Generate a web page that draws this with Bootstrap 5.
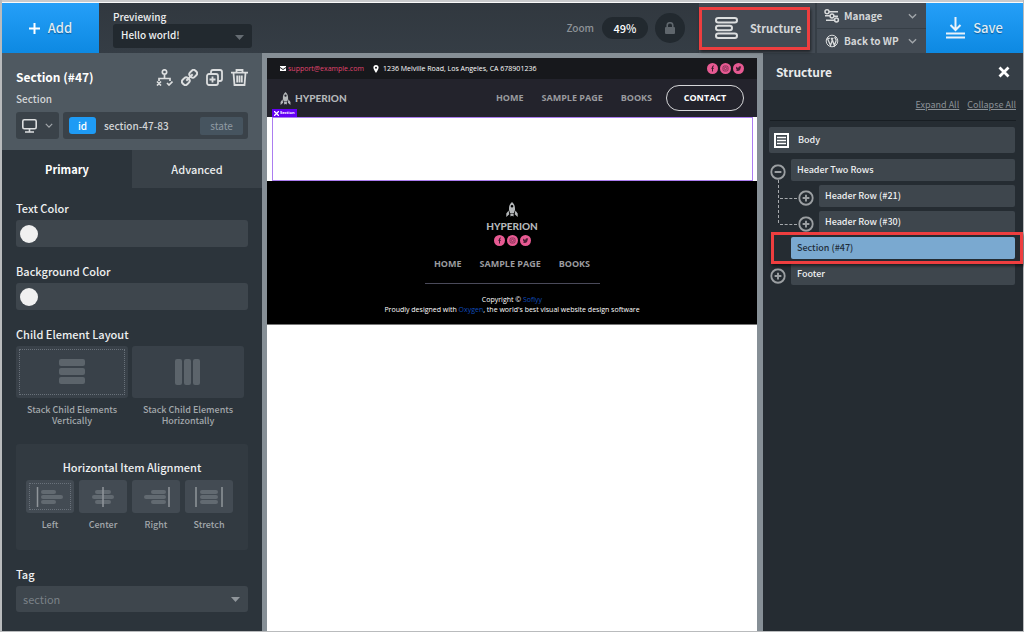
<!DOCTYPE html>
<html lang="en">
<head>
<meta charset="utf-8">
<meta name="viewport" content="width=device-width, initial-scale=1">
<title>Page builder</title>
<link href="https://cdn.jsdelivr.net/npm/bootstrap@5.3.0/dist/css/bootstrap.min.css" rel="stylesheet">
<script src="https://cdn.jsdelivr.net/npm/bootstrap@5.3.0/dist/js/bootstrap.bundle.min.js"></script>
<style>
:root { --ink:#2c343b; --field:#3e464d; --tile:#394149; --blue:#1e9bf5; --red:#ee3e3f; }
body { font-family:"Noto Sans CJK SC",sans-serif; font-size:10px; line-height:14px; font-weight:500; color:#eef0f1; background:#fff; }
button, input, select { font:inherit; color:inherit; }
button { border:0; padding:0; background:none; }
svg { display:block; flex:none; }
.builder { min-height:100vh; background:var(--ink); border:solid #b9bbbd; border-width:0 1px 1px 2px; }
.edge { height:3px; background:#fafafa; border-top:2px solid #c9cacc; }
/* toolbar */
.toolbar { height:50px; background:linear-gradient(#31383f,#353d45); }
.action { width:97px; background:linear-gradient(#259ff8,#0d89e2); font-size:13px; color:#dfeaf3; text-shadow:0 1px 1px #0a5c9c; }
.preview-pick { width:139px; margin-left:14px; padding-top:7px; }
.pick { appearance:none; width:100%; border:0; border-radius:3px; }
.pick-wrap { position:relative; }
.pick-wrap svg { position:absolute; right:8px; top:11px; pointer-events:none; }
.preview-pick .pick { height:24px; background:#22292f; padding:0 8px 2px; display:block; }
.zoom-text { color:#8d9297; }
.zoom-pill { width:46px; height:22px; border-radius:11px; background:#22292f; color:#fff; font-size:11px; }
.lock { width:30px; height:30px; border-radius:50%; background:#22292f; color:#5f666c; margin:0 14px 0 7px; }
.structure-btn { position:relative; width:116px; background:#434b54; font-weight:700; font-size:11px; color:#d4d6d8; }
.marked::after { content:""; position:absolute; border:3px solid var(--red); box-shadow:1px 2px 3px rgba(0,0,0,.55); pointer-events:none; z-index:2; }
.structure-btn::after { inset:4px 5px 3px 0; }
.menus { width:111px; background:#434b54; border-left:2px solid #363e46; font-weight:700; color:#d4d6d8; }
.menus button { height:25px; padding:0 9px 0 7px; }
.menus button + button { border-top:1px solid #363e46; }
/* side panels */
.side { width:260px; flex:none; }
.side-head { background:#4f5961; height:97px; padding:15px 14px 0; color:#d3d5d7; }
.side-head h1 { font-size:12px; line-height:18px; font-weight:700; color:#fff; }
.device, .selector { height:27px; border-radius:3px; background:#3a4249; }
.device { width:43px; }
.selector { padding:0 5px 0 6px; }
.id-tag { background:var(--blue); width:27px; height:17px; border-radius:3px; color:#fff; }
.state { width:43px; height:18px; border-radius:2px; background:#46545f; color:#8f9aa3; font-weight:400; }
.tabs button { height:38px; background:#394148; font-size:11px; color:#eceeef; }
.tabs button.active { background:var(--ink); font-weight:700; color:#fff; }
.controls { padding:13px 14px 0; }
.controls label, .controls h2 { display:block; font-size:11px; line-height:14px; font-weight:500; margin:0 0 5px; }
.color-row { display:flex; align-items:center; height:27px; border-radius:3px; background:var(--field); padding:0 4px; margin-bottom:17px; }
.color-row button { width:18px; height:18px; border-radius:50%; background:#f0f0f0; flex:none; }
.color-row input { flex:1; min-width:0; border:0; background:none; outline:0; }
.choice { color:#a3a8ac; font-size:9px; line-height:11px; text-align:center; }
.tile { display:flex; align-items:center; justify-content:center; border-radius:3px; background:var(--tile); padding:4px; }
.tile.on span { outline:1px dotted #69717a; }
.tile span { width:100%; height:100%; display:flex; align-items:center; justify-content:center; }
.stack .choice { width:112px; }
.stack .tile { height:52px; width:112px; margin-bottom:6px; }
.align-box { background:#323a41; border-radius:3px; height:106px; margin:18px 0 17px; padding:16px 10px 0; }
.align-box h2 { text-align:center; margin-bottom:6px; }
.align-box .d-flex { gap:5px; }
.align-box .choice { width:48px; }
.align-box .tile { width:48px; height:33px; background:#434b53; margin-bottom:6px; }
.tag-pick { height:26px; background:var(--field); color:#7a8187; padding:0 7px; font-size:11px; font-weight:400; display:block; }
/* canvas */
.stage { background:#868f96; padding:5px 6px 0 5px; min-width:0; }
.site { height:100%; background:#fff; font-family:"Open Sans",sans-serif; font-size:7px; line-height:10px; font-weight:400; }
.site a { text-decoration:none; }
.strip { height:21px; background:#17181c; padding:0 13px; color:#fff; }
.strip a { color:#e0456f; margin:0 9px 0 2px; }
.masthead { height:38px; background:#23232c; padding:0 13px; }
.menu-links, .menu-links a { color:#9a9b9f; font-size:9px; font-weight:700; }
.menu-links { gap:18px; }
.social { gap:2px; }
.brand { font-family:Lato,sans-serif; font-weight:900; font-size:10px; color:#b4b7b9; }
.contact { width:78px; height:26px; border:1px solid #d6d7d9; border-radius:13px; color:#fff !important; margin-left:-4px; }
.picked { position:relative; height:64px; padding:0 4px 0 5px; }
.picked > div { border:1px solid #ab7df0; height:100%; }
.flag { position:absolute; left:5px; top:-8px; height:8px; width:25px; background:#6400f5; color:#fff; font-size:4px; line-height:8px; font-weight:700; }
.flag svg { margin:0 1px 0 2px; }
.foot { background:#000; height:144px; padding-top:21px; color:#fff; border-bottom:1px solid #777; }
.foot .menu-links { margin-top:13px; }
.foot p a { color:#0f4bb8; }
.foot hr { width:175px; margin:14px 0 11px; border-color:#4a4a5a; opacity:1; }
/* tree */
.tree-panel { background:#252c32; padding-bottom:8px; }
.tree-head { height:37px; background:#363e46; padding:0 13px; }
.tree-head h2 { font-size:12px; line-height:18px; font-weight:700; margin:0; color:#e9ebec; }
.tree-links { margin:0 7px; height:31px; border-bottom:1px solid #181e23; font-size:9px; font-weight:400; }
.tree-links a { color:#8b9197; }
.tree { list-style:none; margin:0; padding:6px 8px 0 6px; }
.tree ul { list-style:none; margin:0; padding:0 0 0 28px; position:relative; }
.tree ul::before { content:""; position:absolute; left:9px; top:-5px; height:43px; border-left:1px dashed #a5a9ac; }
.tree li li { position:relative; }
.tree li li::before { content:""; position:absolute; left:-17px; top:13px; width:17px; border-top:1px dashed #a5a9ac; }
.node { display:flex; align-items:center; position:relative; height:22px; margin-bottom:4px; }
.node .twist { width:22px; height:22px; flex:none; padding-top:3px; color:#9b9fa2; }
.node .name { flex:1; height:22px; border-radius:2px; background:var(--field); text-align:left; padding:0 6px; font-size:9px; }
.node.body { height:26px; margin-bottom:6px; background:var(--field); border-radius:2px; padding-left:5px; }
.node.body .name { padding-left:9px; }
.node.sel .name { background:#7aa9d0; color:#1f2d3a; }
.node.sel::after { inset:-5px -8px -5px 2px; }
</style>
</head>
<body>
<svg width="0" height="0" class="position-absolute" aria-hidden="true">
  <defs>
    <symbol id="chev" viewBox="0 0 10 6"><path d="M1 1l4 4 4-4" fill="none" stroke="#a2a7ab" stroke-width="1.5"/></symbol>
    <symbol id="rocket" viewBox="0 0 12 15"><path d="M6 0C3.500 2 2.800 4.500 3 8L4 11H8L9 8C9.200 4.500 8.500 2 6 0ZM6 3a1.300 1.300 0 1 1 0 2.600A1.300 1.300 0 0 1 6 3ZM2.600 8.500L.3 11.500V15L3.300 12.300ZM9.400 8.500l2.300 3V15L8.700 12.300ZM4.300 11.500h3.400L7.500 14.500 6 13.800 4.500 14.500Z" fill="#b4b7b9" fill-rule="evenodd"/></symbol>
    <symbol id="fb" viewBox="0 0 11 11"><circle cx="5.500" cy="5.500" r="5.500" fill="#e75a92"/><path d="M7 3H6.300Q5.500 3 5.500 4V8.500M4.300 5.300H6.800" stroke="#3a1c2c" stroke-width="1" fill="none"/></symbol>
    <symbol id="ig" viewBox="0 0 11 11"><circle cx="5.500" cy="5.500" r="5.500" fill="#e75a92"/><rect x="3" y="3" width="5" height="5" rx="1.300" fill="none" stroke="#6d2a49" stroke-width=".8"/><circle cx="5.500" cy="5.500" r="1.200" fill="none" stroke="#6d2a49" stroke-width=".7"/></symbol>
    <symbol id="tw" viewBox="0 0 11 11"><circle cx="5.500" cy="5.500" r="5.500" fill="#e75a92"/><path d="M3 3.500Q4 4.700 5.400 4.700 5.400 3.200 6.700 3.200L8.200 3.600 7.600 5Q7.300 8 4.700 8L2.800 7.400 3.900 7Q2.700 5.500 3 3.500Z" fill="#4a2036"/></symbol>
    <symbol id="plus" viewBox="0 0 14 14"><circle cx="7" cy="7" r="6" fill="none" stroke="currentColor" stroke-width="1.700"/><path d="M7 4v6M4 7h6" stroke="currentColor" stroke-width="1.700"/></symbol>
    <symbol id="minus" viewBox="0 0 14 14"><circle cx="7" cy="7" r="6" fill="none" stroke="currentColor" stroke-width="1.700"/><path d="M4 7h6" stroke="currentColor" stroke-width="1.700"/></symbol>
  </defs>
</svg>
<div class="builder d-flex flex-column">
  <div class="edge"></div>
  <header class="toolbar d-flex">
    <button class="action d-flex align-items-center justify-content-center gap-2" type="button"><svg width="11" height="11" viewBox="0 0 11 11"><path d="M5.500 0v11M0 5.500h11" stroke="#fff" stroke-width="2"/></svg>Add</button>
    <div class="preview-pick">
      <label class="d-block" for="preview">Previewing</label>
      <div class="pick-wrap"><select class="pick" id="preview"><option>Hello world!</option></select><svg width="9" height="5"><path d="M0 0h9L4.500 5z" fill="#656c72"/></svg></div>
    </div>
    <div class="d-flex align-items-center ms-auto">
      <label class="zoom-text me-2" for="zoomv">Zoom</label>
      <button class="zoom-pill" id="zoomv" type="button">49%</button>
      <button class="lock d-flex align-items-center justify-content-center" type="button" aria-label="Lock zoom"><svg width="10" height="12" viewBox="0 0 10 12"><rect y="5" width="10" height="7" rx="1" fill="currentColor"/><path d="M2.200 5V3.500a2.800 2.800 0 0 1 5.600 0V5" fill="none" stroke="currentColor" stroke-width="1.600"/></svg></button>
    </div>
    <button class="structure-btn marked d-flex align-items-center ps-3 gap-2" type="button"><svg class="me-1" width="23" height="22" viewBox="0 0 23 22"><g fill="none" stroke="#dcdedf" stroke-width="2"><rect x="1" y="1" width="21" height="4.400" rx="2.200"/><rect x="1" y="8.800" width="16" height="4.400" rx="2.200"/><rect x="1" y="16.600" width="21" height="4.400" rx="2.200"/></g></svg>Structure</button>
    <div class="menus d-flex flex-column">
      <button class="d-flex align-items-center" type="button"><svg width="16" height="14" viewBox="0 0 16 14"><g fill="none" stroke="#d8dadb" stroke-width="1.500"><circle cx="3" cy="2.800" r="2"/><path d="M5 2.800h9M1 6.800h5M10 7.200h4M2 11.200h8"/><circle cx="8" cy="7" r="1.900"/><circle cx="12.500" cy="11" r="1.900"/></g></svg><span class="ms-1">Manage</span><svg class="ms-auto" width="9" height="6"><use href="#chev"/></svg></button>
      <button class="d-flex align-items-center" type="button"><svg width="16" height="14" viewBox="0 0 16 14"><circle cx="8" cy="7" r="5.800" fill="none" stroke="#d8dadb"/><path d="M3.500 4.500L6.500 11.500 8.200 6.500 7.500 4.500M8 5l2.400 6.500L12 7Q12.400 5.500 11.300 4.300L10.700 3M3.200 4.300h2.600M6.800 4.300h2.600" fill="none" stroke="#d8dadb" stroke-width="1.300"/></svg><span class="ms-1">Back to WP</span><svg class="ms-auto" width="9" height="6"><use href="#chev"/></svg></button>
    </div>
    <button class="action d-flex align-items-center justify-content-center gap-2" type="button"><svg width="19" height="22" viewBox="0 0 19 22"><path d="M9.500 0v13M4.500 8l5 5 5-5M0 16.500h19M0 20.500h19" fill="none" stroke="#e9f2fa" stroke-width="2"/></svg>Save</button>
  </header>
  <main class="d-flex flex-grow-1">
    <aside class="side">
      <div class="side-head">
        <div class="d-flex align-items-center">
          <h1 class="mb-0 me-auto">Section (#47)</h1>
          <div class="d-flex gap-2">
            <button type="button" aria-label="Conditions"><svg width="17" height="17" viewBox="0 0 17 17"><g fill="none" stroke="#dcdedf" stroke-width="1.700"><circle cx="8.500" cy="3" r="2.200"/><path d="M8.500 5.500v4M3 12V9.500h11V12M1 12.500l4 4M5 12.500l-4 4M11 14l2 2 3.500-3.500"/></g></svg></button>
            <button type="button" aria-label="Link"><svg width="17" height="17" viewBox="0 0 17 17"><g fill="none" stroke="#dcdedf" stroke-width="2" transform="rotate(-45 8.500 8.500)"><rect x="-.5" y="5.300" width="7.500" height="6.400" rx="2.600"/><rect x="10" y="5.300" width="7.500" height="6.400" rx="2.600"/><path d="M4 8.500h9"/></g></svg></button>
            <button type="button" aria-label="Duplicate"><svg width="17" height="17" viewBox="0 0 17 17"><g fill="none" stroke="#dcdedf" stroke-width="1.800"><rect x="1" y="5" width="11" height="11" rx="2"/><path d="M5 5V3q0-2 2-2h7q2 0 2 2v7q0 2-2 2h-2M6.500 7.500v6M3.500 10.500h6"/></g></svg></button>
            <button type="button" aria-label="Delete"><svg width="17" height="17" viewBox="0 0 17 17"><path d="M0 3.700h17M5.500 3.500V1h6v2.500M2.500 4l1 12h10l1-12M6.200 6.500v7M8.500 6.500v7M10.800 6.500v7" fill="none" stroke="#dcdedf" stroke-width="1.800"/></svg></button>
          </div>
        </div>
        <div class="pt-1 mt-1 pb-1 lh-1">Section</div>
        <div class="d-flex gap-1 mt-1">
          <button class="device d-flex align-items-center justify-content-center gap-2" type="button" aria-label="Device"><svg width="15" height="14" viewBox="0 0 15 14"><rect x=".8" y=".8" width="13.400" height="9" rx="1.500" fill="none" stroke="#dcdedf" stroke-width="1.600"/><path d="M7.500 10v2.500M3 13h9" stroke="#dcdedf" stroke-width="1.600"/></svg><svg width="8" height="5"><use href="#chev"/></svg></button>
          <div class="selector d-flex align-items-center flex-grow-1"><button class="id-tag" type="button">id</button><span class="ms-2 me-auto">section-47-83</span><button class="state" type="button">state</button></div>
        </div>
      </div>
      <div class="tabs d-flex"><button class="active w-50" type="button">Primary</button><button class="w-50" type="button">Advanced</button></div>
      <div class="controls">
        <label for="tc">Text Color</label>
        <div class="color-row"><button type="button" aria-label="Pick text color"></button><input id="tc" type="text"></div>
        <label for="bc">Background Color</label>
        <div class="color-row"><button type="button" aria-label="Pick background color"></button><input id="bc" type="text"></div>
        <h2>Child Element Layout</h2>
        <div class="stack d-flex gap-1">
          <button class="choice" type="button"><span class="tile on"><span><svg width="26" height="26" fill="#5c646b"><rect width="26" height="7" rx="2"/><rect y="9" width="26" height="7" rx="2"/><rect y="18" width="26" height="7" rx="2"/></svg></span></span>Stack Child Elements<br>Vertically</button>
          <button class="choice" type="button"><span class="tile"><span><svg width="26" height="26" fill="#5c646b"><rect width="7" height="26" rx="2"/><rect x="9" width="7" height="26" rx="2"/><rect x="18" width="7" height="26" rx="2"/></svg></span></span>Stack Child Elements<br>Horizontally</button>
        </div>
        <div class="align-box">
          <h2>Horizontal Item Alignment</h2>
          <div class="d-flex">
            <button class="choice" type="button"><span class="tile on"><span><svg width="28" height="20"><g fill="#626a71"><rect x="5" y="3" width="15" height="4" rx="2"/><rect x="5" y="8" width="22" height="4" rx="2"/><rect x="5" y="13" width="15" height="4" rx="2"/></g><path d="M1.500 0v20" stroke="#90969b" stroke-width="1.500"/></svg></span></span>Left</button>
            <button class="choice" type="button"><span class="tile"><span><svg width="28" height="20"><g fill="#626a71"><rect x="6" y="3" width="16" height="4" rx="2"/><rect x="3" y="8" width="22" height="4" rx="2"/><rect x="6" y="13" width="16" height="4" rx="2"/></g><path d="M14 0v20" stroke="#90969b" stroke-width="1.500"/></svg></span></span>Center</button>
            <button class="choice" type="button"><span class="tile"><span><svg width="28" height="20"><g fill="#626a71"><rect x="9" y="3" width="15" height="4" rx="2"/><rect x="2" y="8" width="22" height="4" rx="2"/><rect x="9" y="13" width="15" height="4" rx="2"/></g><path d="M27 0v20" stroke="#90969b" stroke-width="1.500"/></svg></span></span>Right</button>
            <button class="choice" type="button"><span class="tile"><span><svg width="28" height="20"><g fill="#626a71"><rect x="5" y="3" width="18" height="4" rx="2"/><rect x="5" y="8" width="18" height="4" rx="2"/><rect x="5" y="13" width="18" height="4" rx="2"/></g><path d="M1 0v20M27 0v20" stroke="#90969b" stroke-width="1.500"/></svg></span></span>Stretch</button>
          </div>
        </div>
        <label for="tag">Tag</label>
        <div class="pick-wrap"><select class="pick tag-pick" id="tag"><option>section</option></select><svg width="9" height="5"><path d="M0 0h9L4.500 5z" fill="#90969b"/></svg></div>
      </div>
    </aside>
    <section class="stage flex-grow-1">
      <div class="site">
        <div class="strip d-flex align-items-center">
          <svg width="6" height="5"><path d="M0 0h6v1L3 3 0 1zM0 2l3 2 3-2v3H0z" fill="#fff"/></svg><a href="#">support@example.com</a>
          <svg class="me-1" width="6" height="8"><path d="M3 0a2.600 2.600 0 0 1 2.600 2.700Q5.600 4 3 8 .4 4 .4 2.700A2.600 2.600 0 0 1 3 0zM3 1.700a1 1 0 1 0 0 2 1 1 0 0 0 0-2z" fill="#fff"/></svg><span>1236 Melville Road, Los Angeles, CA 678901236</span>
          <div class="social d-flex ms-auto"><svg width="11" height="11"><use href="#fb"/></svg><svg width="11" height="11"><use href="#ig"/></svg><svg width="11" height="11"><use href="#tw"/></svg></div>
        </div>
        <div class="masthead d-flex align-items-center">
          <svg class="me-1" width="11" height="13"><use href="#rocket"/></svg><span class="brand">HYPERION</span>
          <nav class="menu-links d-flex align-items-center ms-auto"><a href="#">HOME</a><a href="#">SAMPLE PAGE</a><a href="#">BOOKS</a><a class="contact d-flex align-items-center justify-content-center" href="#">CONTACT</a></nav>
        </div>
        <div class="picked"><span class="flag d-flex align-items-center"><svg width="5" height="5"><path d="M0 0l5 5M5 0L0 5" stroke="#fff" stroke-width="1.300"/></svg>Section</span><div></div></div>
        <div class="foot d-flex flex-column align-items-center">
          <svg width="12" height="15"><use href="#rocket"/></svg>
          <span class="brand mt-1">HYPERION</span>
          <div class="social d-flex mt-1"><svg width="11" height="11"><use href="#fb"/></svg><svg width="11" height="11"><use href="#ig"/></svg><svg width="11" height="11"><use href="#tw"/></svg></div>
          <nav class="menu-links d-flex"><a href="#">HOME</a><a href="#">SAMPLE PAGE</a><a href="#">BOOKS</a></nav>
          <hr>
          <p class="m-0 text-center">Copyright © <a href="#">Soflyy</a><br>Proudly designed with <a href="#">Oxygen</a>, the world's best visual website design software</p>
        </div>
      </div>
    </section>
    <aside class="side tree-panel">
      <div class="tree-head d-flex align-items-center justify-content-between"><h2>Structure</h2><button type="button" aria-label="Close"><svg width="12" height="12"><path d="M1.500 1.500l9 9M10.500 1.500l-9 9" stroke="#fff" stroke-width="2.800"/></svg></button></div>
      <div class="tree-links d-flex justify-content-end align-items-center gap-2"><a href="#">Expand All</a><a href="#">Collapse All</a></div>
      <ul class="tree">
        <li><div class="node body"><svg width="15" height="15"><rect width="15" height="15" fill="#fff"/><rect x="2" y="2" width="11" height="11" fill="#3e464d"/><path d="M3 4.500h9M3 7.500h9M3 10.500h9" stroke="#fff" stroke-width="1.300"/></svg><button class="name" type="button">Body</button></div></li>
        <li><div class="node"><button class="twist" type="button" aria-label="Collapse"><svg width="18" height="18" viewBox="-1 -1 16 16"><use href="#minus" width="14" height="14"/></svg></button><button class="name" type="button">Header Two Rows</button></div>
          <ul>
            <li><div class="node"><button class="twist" type="button" aria-label="Expand"><svg width="18" height="18" viewBox="-1 -1 16 16"><use href="#plus" width="14" height="14"/></svg></button><button class="name" type="button">Header Row (#21)</button></div></li>
            <li><div class="node"><button class="twist" type="button" aria-label="Expand"><svg width="18" height="18" viewBox="-1 -1 16 16"><use href="#plus" width="14" height="14"/></svg></button><button class="name" type="button">Header Row (#30)</button></div></li>
          </ul></li>
        <li><div class="node sel marked"><span class="twist"></span><button class="name" type="button">Section (#47)</button></div></li>
        <li><div class="node"><button class="twist" type="button" aria-label="Expand"><svg width="18" height="18" viewBox="-1 -1 16 16"><use href="#plus" width="14" height="14"/></svg></button><button class="name" type="button">Footer</button></div></li>
      </ul>
    </aside>
  </main>
</div>
</body>
</html>
